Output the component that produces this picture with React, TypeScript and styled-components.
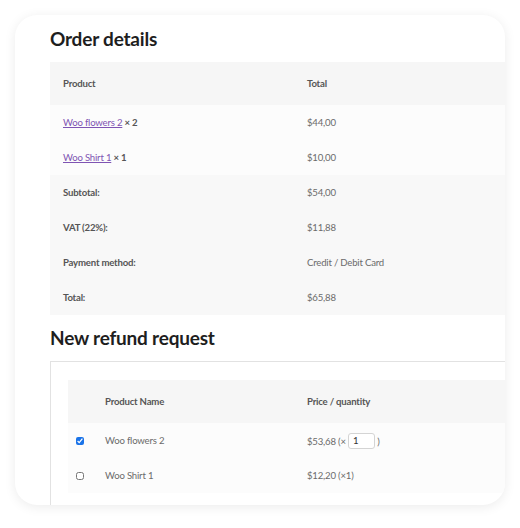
import React from 'react'
import styled, { createGlobalStyle } from 'styled-components'

interface OrderLine {
  name: string
  qty: number
  total: string
}

interface RefundLine {
  name: string
  price: string
  checked: boolean
  editable: boolean
}

const orderLines: OrderLine[] = [
  { name: 'Woo flowers 2', qty: 2, total: '$44,00' },
  { name: 'Woo Shirt 1', qty: 1, total: '$10,00' },
]

const totals = [
  { label: 'Subtotal:', value: '$54,00' },
  { label: 'VAT (22%):', value: '$11,88' },
  { label: 'Payment method:', value: 'Credit / Debit Card' },
  { label: 'Total:', value: '$65,88' },
]

const refundLines: RefundLine[] = [
  { name: 'Woo flowers 2', price: '$53,68', checked: true, editable: true },
  { name: 'Woo Shirt 1', price: '$12,20', checked: false, editable: false },
]

const GlobalStyle = createGlobalStyle`
  html, body {
    margin: 0;
    background: #ffffff;
    font-family: Lato, "Liberation Sans", sans-serif;
  }
  * {
    box-sizing: border-box;
  }
`

function App() {
  return (
    <>
      <GlobalStyle />
      <Page>
        <Card>
          <Heading>Order details</Heading>
          <OrderTable>
            <colgroup>
              <col style={{ width: 244 }} />
              <col />
            </colgroup>
            <thead>
              <HeadRow>
                <Th>Product</Th>
                <Th>Total</Th>
              </HeadRow>
            </thead>
            <tbody>
              {orderLines.map((line) => (
                <ItemRow key={line.name}>
                  <Td>
                    <ProductLink href="#">{line.name}</ProductLink>
                    <Qty> × {line.qty}</Qty>
                  </Td>
                  <Td>{line.total}</Td>
                </ItemRow>
              ))}
            </tbody>
            <tfoot>
              {totals.map((row) => (
                <FootRow key={row.label}>
                  <Th>{row.label}</Th>
                  <Td>{row.value}</Td>
                </FootRow>
              ))}
            </tfoot>
          </OrderTable>

          <Heading $spaced>New refund request</Heading>
          <RefundBox>
            <RefundTable>
              <colgroup>
                <col style={{ width: 24 }} />
                <col style={{ width: 202 }} />
                <col />
              </colgroup>
              <thead>
                <HeadRow>
                  <Th />
                  <Th>Product Name</Th>
                  <Th>Price / quantity</Th>
                </HeadRow>
              </thead>
              <tbody>
                {refundLines.map((line) => (
                  <ItemRow key={line.name}>
                    <CheckCell>
                      <Check type="checkbox" defaultChecked={line.checked} />
                    </CheckCell>
                    <Td>{line.name}</Td>
                    <Td>
                      {line.editable ? (
                        <>
                          {line.price} (× <QtyInput defaultValue="1" /> )
                        </>
                      ) : (
                        `${line.price} (×1)`
                      )}
                    </Td>
                  </ItemRow>
                ))}
              </tbody>
            </RefundTable>
          </RefundBox>
        </Card>
      </Page>
    </>
  )
}

const Page = styled.div`
  padding: 15px;
  width: 520px;
  height: 528px;
`

const Card = styled.div`
  width: 490px;
  height: 490px;
  border-radius: 22px;
  background: #ffffff;
  box-shadow: 0 2px 12px rgba(0, 0, 0, 0.08);
  overflow: hidden;
  padding: 11px 0 0 35px;
`

const Heading = styled.h2<{ $spaced?: boolean }>`
  margin: ${(p) => (p.$spaced ? '10px' : '0')} 0 0;
  height: 36px;
  line-height: 26px;
  font-size: 19px;
  font-weight: 700;
  letter-spacing: -0.2px;
  color: #1e1e1e;
`

const OrderTable = styled.table`
  width: 520px;
  border-collapse: collapse;
  table-layout: fixed;
  font-size: 9.6px;
  letter-spacing: -0.2px;
  color: #6b6b6b;
`

const RefundTable = styled(OrderTable)`
  width: 500px;
`

const HeadRow = styled.tr`
  height: 43px;
  background: #f6f6f6;
`

const ItemRow = styled.tr`
  height: 35px;
  background: #fcfcfc;
`

const FootRow = styled.tr`
  height: 35px;
  background: #f8f8f8;
`

const Th = styled.th`
  padding: 0 13px;
  text-align: left;
  font-weight: 700;
  color: #555555;
`

const Td = styled.td`
  padding: 0 13px;
  text-align: left;
`

const CheckCell = styled(Td)`
  padding: 0 0 0 8px;
`

const ProductLink = styled.a`
  color: #7f54b3;
  text-decoration: underline;
`

const Qty = styled.strong`
  color: #555555;
`

const Check = styled.input`
  display: block;
  width: 8px;
  height: 8px;
  margin: 0;
  accent-color: #1a73e8;
`

const QtyInput = styled.input`
  width: 27px;
  height: 16px;
  padding: 0 4px;
  border: 1px solid #d4d4d4;
  border-radius: 3px;
  font: inherit;
  color: #333333;
`

const RefundBox = styled.div`
  width: 520px;
  height: 200px;
  border: 1px solid #e2e2e2;
  padding: 18px 0 0 17px;
`

export default App
